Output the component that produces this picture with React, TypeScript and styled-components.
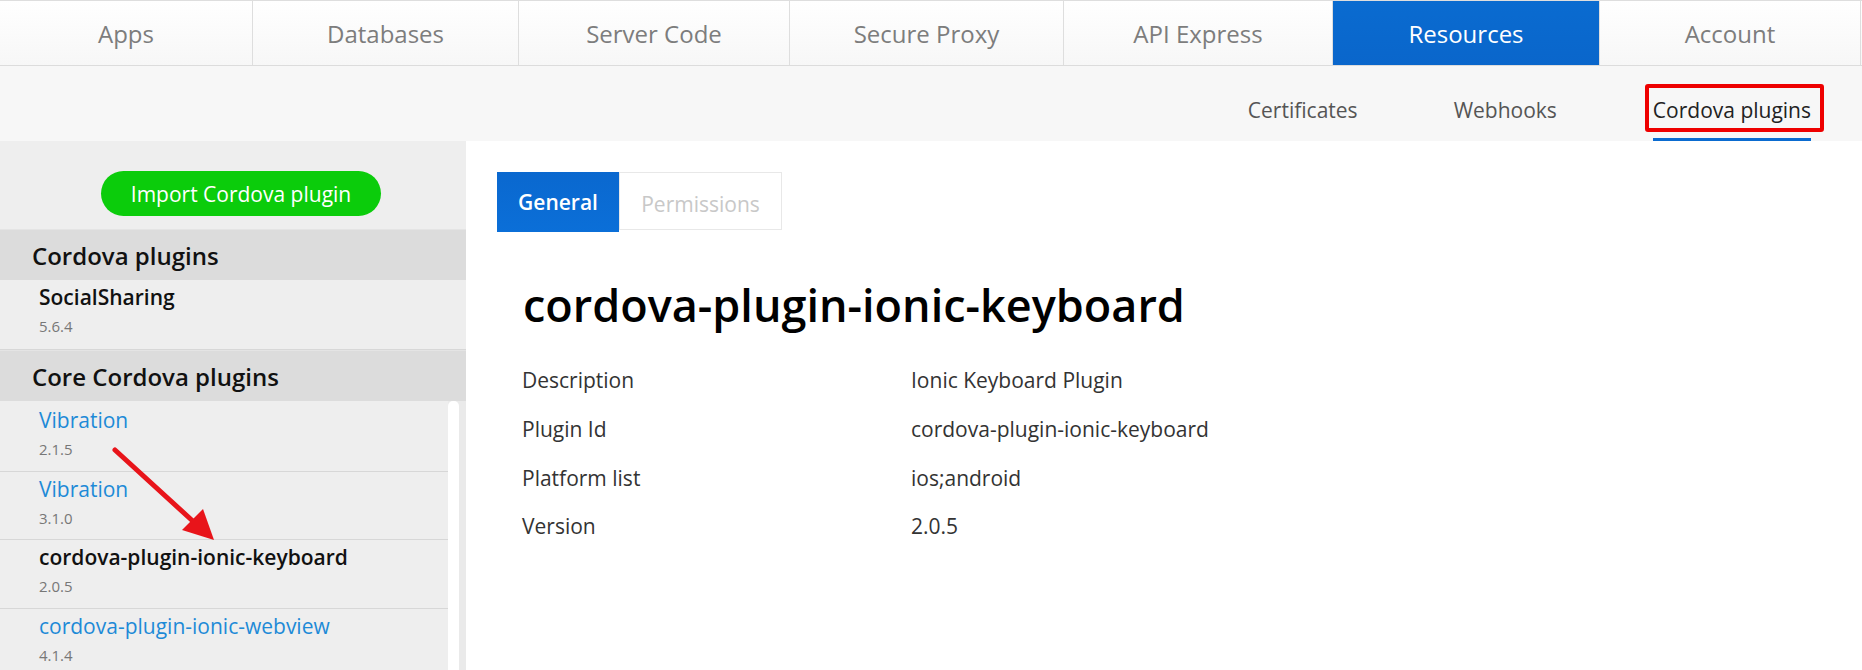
import React from "react";
import styled, { createGlobalStyle } from "styled-components";

const GlobalStyle = createGlobalStyle`
  html, body { margin: 0; padding: 0; background: #ffffff; }
  body { font-family: "Open Sans", "Noto Sans", "Liberation Sans", sans-serif; overflow: hidden; }
  * { box-sizing: border-box; }
`;

const Page = styled.div`
  width: 1862px;
  height: 670px;
  display: flex;
  flex-direction: column;
  overflow: hidden;
`;

const TopNav = styled.nav`
  display: flex;
  height: 66px;
  border-top: 1px solid #dedede;
  border-bottom: 1px solid #dcdcdc;
  background: linear-gradient(#ffffff, #f7f7f7);
`;

const NavTab = styled.div<{ $w: number; $active?: boolean }>`
  width: ${(p) => p.$w}px;
  flex: none;
  display: flex;
  align-items: center;
  justify-content: center;
  font-size: 24px;
  color: ${(p) => (p.$active ? "#ffffff" : "#7d7d7d")};
  background: ${(p) => (p.$active ? "linear-gradient(#0a6bd0, #0a66cb)" : "transparent")};
  border-right: 1px solid #dedede;
`;

const SubNav = styled.div`
  height: 75px;
  flex: none;
  display: flex;
  justify-content: flex-end;
  gap: 96px;
  padding-right: 51px;
  background: #f7f7f7;
`;

const SubItem = styled.div<{ $active?: boolean }>`
  position: relative;
  display: flex;
  align-items: flex-end;
  padding-bottom: 14px;
  font-size: 21px;
  color: ${(p) => (p.$active ? "#222" : "#555")};
  border-bottom: 3px solid ${(p) => (p.$active ? "#0a6bd0" : "transparent")};
`;

const Highlight = styled.span`
  position: absolute;
  left: -8px;
  right: -13px;
  top: 18px;
  bottom: 6px;
  border: 4px solid #ee0000;
  border-radius: 3px;
  pointer-events: none;
`;

const Body = styled.div`
  flex: 1;
  display: flex;
  min-height: 0;
`;

const Sidebar = styled.aside`
  position: relative;
  width: 466px;
  flex: none;
  background: #eeeeee;
  display: flex;
  flex-direction: column;
`;

const ButtonArea = styled.div`
  height: 88px;
  flex: none;
  display: flex;
  justify-content: center;
  padding-top: 30px;
  padding-left: 16px;
`;

const ImportButton = styled.button`
  width: 280px;
  height: 45px;
  border: none;
  border-radius: 23px;
  background: #0bcc0b;
  color: #ffffff;
  font-family: inherit;
  font-size: 21px;
  cursor: pointer;
`;

const GroupHeader = styled.div`
  height: 51px;
  flex: none;
  display: flex;
  align-items: center;
  padding-left: 32px;
  background: #dcdcdc;
  border-top: 1px solid #e4e4e4;
  font-size: 24px;
  font-weight: 600;
  color: #111;
`;

const ListScroll = styled.div`
  flex: 1;
  display: flex;
  min-height: 0;
`;

const ListColumn = styled.div`
  width: 448px;
  flex: none;
`;

const ScrollTrack = styled.div`
  flex: 1;
  display: flex;
  background: #eaeaea;
`;

const ScrollThumb = styled.div`
  width: 11px;
  background: #ffffff;
  border-radius: 5px 5px 0 0;
`;

const Item = styled.div<{ $h?: number; $pt?: number }>`
  height: ${(p) => p.$h ?? 69}px;
  flex: none;
  padding: ${(p) => p.$pt ?? 3}px 0 0 39px;
  border-bottom: 1px solid #d7d7d7;
  background: #eeeeee;
`;

const ItemName = styled.div<{ $selected?: boolean }>`
  font-size: 21px;
  line-height: 28px;
  font-weight: ${(p) => (p.$selected ? 600 : 400)};
  color: ${(p) => (p.$selected ? "#111" : "#1d8ad7")};
`;

const ItemVersion = styled.div`
  margin-top: 5px;
  font-size: 15px;
  line-height: 20px;
  color: #777;
`;

const Arrow = styled.svg`
  position: absolute;
  left: 100px;
  top: 295px;
  pointer-events: none;
`;

const Main = styled.main`
  flex: 1;
  background: #ffffff;
  padding: 31px 0 0 31px;
`;

const TabBar = styled.div`
  display: flex;
  align-items: flex-start;
`;

const Tab = styled.div<{ $active?: boolean; $w: number }>`
  width: ${(p) => p.$w}px;
  height: ${(p) => (p.$active ? 60 : 58)}px;
  display: flex;
  align-items: center;
  justify-content: center;
  padding-top: ${(p) => (p.$active ? 0 : 5)}px;
  font-size: 21px;
  font-weight: ${(p) => (p.$active ? 600 : 400)};
  color: ${(p) => (p.$active ? "#fff" : "#c8c8c8")};
  background: ${(p) => (p.$active ? "linear-gradient(#0a68cf, #0b6fd8)" : "#ffffff")};
  border: ${(p) => (p.$active ? "none" : "1px solid #e8e8e8")};
`;

const Title = styled.h1`
  margin: 45px 0 0 26px;
  font-size: 45px;
  line-height: 56px;
  font-weight: 600;
  color: #000;
`;

const Props = styled.dl`
  margin: 23px 0 0 25px;
  display: grid;
  grid-template-columns: 389px auto;
  grid-auto-rows: 48.7px;
  align-items: center;
  font-size: 21px;
  color: #333;
  dt, dd { margin: 0; }
`;

const navTabs = [
  { label: "Apps", w: 253 },
  { label: "Databases", w: 266 },
  { label: "Server Code", w: 271 },
  { label: "Secure Proxy", w: 274 },
  { label: "API Express", w: 269 },
  { label: "Resources", w: 267, active: true },
  { label: "Account", w: 261 },
];

const coreItems = [
  { name: "Vibration", version: "2.1.5", h: 71, pt: 5 },
  { name: "Vibration", version: "3.1.0", h: 68 },
  { name: "cordova-plugin-ionic-keyboard", version: "2.0.5", selected: true, h: 69 },
  { name: "cordova-plugin-ionic-webview", version: "4.1.4", h: 69 },
];

const props = [
  ["Description", "Ionic Keyboard Plugin"],
  ["Plugin Id", "cordova-plugin-ionic-keyboard"],
  ["Platform list", "ios;android"],
  ["Version", "2.0.5"],
];

export default function App() {
  return (
    <Page>
      <GlobalStyle />
      <TopNav>
        {navTabs.map((t) => (
          <NavTab key={t.label} $w={t.w} $active={t.active}>
            {t.label}
          </NavTab>
        ))}
      </TopNav>
      <SubNav>
        <SubItem>Certificates</SubItem>
        <SubItem>Webhooks</SubItem>
        <SubItem $active>
          Cordova plugins
          <Highlight />
        </SubItem>
      </SubNav>
      <Body>
        <Sidebar>
          <ButtonArea>
            <ImportButton>Import Cordova plugin</ImportButton>
          </ButtonArea>
          <GroupHeader>Cordova plugins</GroupHeader>
          <Item $h={70}>
            <ItemName $selected>SocialSharing</ItemName>
            <ItemVersion>5.6.4</ItemVersion>
          </Item>
          <GroupHeader>Core Cordova plugins</GroupHeader>
          <ListScroll>
            <ListColumn>
              {coreItems.map((it, i) => (
                <Item key={i} $h={it.h} $pt={it.pt}>
                  <ItemName $selected={it.selected}>{it.name}</ItemName>
                  <ItemVersion>{it.version}</ItemVersion>
                </Item>
              ))}
            </ListColumn>
            <ScrollTrack>
              <ScrollThumb />
            </ScrollTrack>
          </ListScroll>
          <Arrow width="130" height="120" viewBox="0 0 130 120">
            <line x1="15" y1="14" x2="96" y2="88" stroke="#e8141a" strokeWidth="5" strokeLinecap="round" />
            <polygon points="114,104 82,94 103,73" fill="#e8141a" />
          </Arrow>
        </Sidebar>
        <Main>
          <TabBar>
            <Tab $active $w={122}>General</Tab>
            <Tab $w={163}>Permissions</Tab>
          </TabBar>
          <Title>cordova-plugin-ionic-keyboard</Title>
          <Props>
            {props.map(([k, v]) => (
              <React.Fragment key={k}>
                <dt>{k}</dt>
                <dd>{v}</dd>
              </React.Fragment>
            ))}
          </Props>
        </Main>
      </Body>
    </Page>
  );
}
